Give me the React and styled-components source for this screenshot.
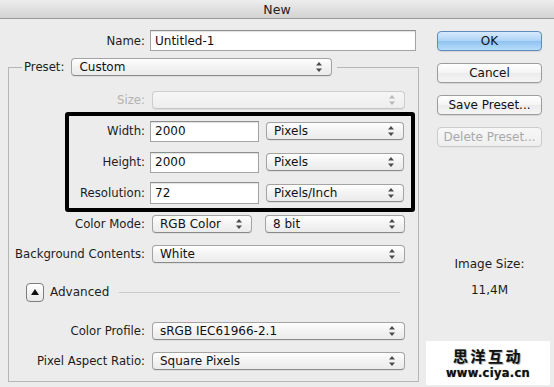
import React from "react";
import styled, { createGlobalStyle } from "styled-components";

const Global = createGlobalStyle`
  html, body { margin: 0; padding: 0; background: #ececec; }
  body {
    font-family: "DejaVu Sans", "Liberation Sans", "Noto Sans CJK SC", sans-serif;
    font-size: 11.7px;
    color: #1c1c1c;
  }
  * { box-sizing: border-box; }
`;

const Window = styled.div`
  position: relative;
  width: 554px;
  height: 387px;
  overflow: hidden;
  background: #ececec;
`;

const TitleBar = styled.div`
  height: 19px;
  background: linear-gradient(#ededed, #d3d3d3);
  border-bottom: 1px solid #9a9a9a;
  display: flex;
  align-items: center;
  justify-content: center;
  font-size: 12.5px;
  color: #222;
`;

const Body = styled.div`
  display: flex;
  padding: 11px 0 0 8px;
`;

const LeftCol = styled.div`
  width: 411px;
  display: flex;
  flex-direction: column;
`;

const RightCol = styled.div`
  margin-left: 18px;
  width: 105px;
  display: flex;
  flex-direction: column;
  align-items: stretch;
  padding-top: 1px;
`;

const NameRow = styled.div`
  display: grid;
  grid-template-columns: 137px 266px;
  column-gap: 5px;
  align-items: center;
  height: 21px;
`;

const Label = styled.span`
  text-align: right;
  white-space: nowrap;
  color: ${(p) => (p.$disabled ? "#b2b2b2" : "#1c1c1c")};
`;

const TextInput = styled.input`
  width: ${(p) => p.$w}px;
  height: ${(p) => p.$h || 21}px;
  margin: 0;
  padding: 0 0 0 4px;
  font: inherit;
  font-size: 12px;
  color: #111;
  background: #fff;
  border: 1px solid #a4a4a4;
  border-top-color: #8e8e8e;
  box-shadow: inset 0 1px 1px rgba(0, 0, 0, 0.12);
  outline: none;
`;

const Group = styled.fieldset`
  margin: 7px 0 0 0;
  padding: 13px 0 9px 0;
  border: 1px solid #b6b6b6;
  min-width: 0;
`;

const Legend = styled.legend`
  margin-left: 13px;
  padding: 0 5px 0 2px;
`;

const LegendInner = styled.span`
  display: flex;
  align-items: center;
  gap: 7px;
`;

const Row = styled.div`
  display: grid;
  grid-template-columns: 136px auto;
  column-gap: 5px;
  align-items: center;
  height: 22px;
  margin-top: ${(p) => p.$mt || 0}px;
`;

const Controls = styled.div`
  display: flex;
  align-items: center;
  gap: ${(p) => p.$gap || 0}px;
  padding-left: ${(p) => p.$pl || 0}px;
`;

const PopupBox = styled.div`
  position: relative;
  width: ${(p) => p.$w}px;
  height: 18px;
  border: 1px solid ${(p) => (p.$disabled ? "#cdcdcd" : "#a3a3a3")};
  border-bottom-color: ${(p) => (p.$disabled ? "#c4c4c4" : "#8a8a8a")};
  border-radius: 4px;
  background: ${(p) =>
    p.$disabled
      ? "linear-gradient(#f6f6f6, #eeeeee)"
      : "linear-gradient(#ffffff, #f3f3f3 50%, #ebebeb)"};
  box-shadow: 0 1px 0 rgba(0, 0, 0, 0.06);
  display: flex;
  align-items: center;
  padding-left: 7px;
  font-size: 12px;
  color: #111;
  white-space: nowrap;
`;

const Arrows = styled.svg`
  position: absolute;
  right: 9px;
  top: 50%;
  margin-top: -5px;
`;

const Popup = ({ w, disabled, children }) => (
  <PopupBox $w={w} $disabled={disabled}>
    {children}
    <Arrows width="6" height="10" viewBox="0 0 6 10">
      <polygon points="3,0 6,3.5 0,3.5" fill={disabled ? "#b8b8b8" : "#4a4a4a"} />
      <polygon points="0,6.5 6,6.5 3,10" fill={disabled ? "#b8b8b8" : "#4a4a4a"} />
    </Arrows>
  </PopupBox>
);

const Highlight = styled.div`
  position: relative;
  margin-top: 9px;
  display: flex;
  flex-direction: column;
  gap: 9px;
  &::after {
    content: "";
    position: absolute;
    top: -8px;
    bottom: -8px;
    left: 56px;
    right: 3px;
    border: 4px solid #000;
    border-radius: 3px;
    pointer-events: none;
  }
`;

const AdvancedRow = styled.div`
  display: flex;
  align-items: center;
  height: 22px;
  margin-top: 16px;
  padding: 0 18px 0 17px;
  gap: 6px;
`;

const Disclosure = styled.div`
  width: 18px;
  height: 19px;
  border: 1px solid #7d7d7d;
  border-radius: 4px;
  background: linear-gradient(#ffffff, #e9e9e9);
  display: flex;
  align-items: center;
  justify-content: center;
`;

const AdvText = styled.span`
  font-size: 12px;
  color: #1c1c1c;
`;

const Rule = styled.div`
  flex: 1;
  height: 1px;
  margin-left: 4px;
  background: #cacaca;
`;

const Button = styled.div`
  height: 20px;
  margin-top: ${(p) => p.$mt || 0}px;
  border-radius: 4px;
  display: flex;
  align-items: center;
  justify-content: center;
  font-size: 12px;
  color: ${(p) => (p.$disabled ? "#a9a9a9" : "#111")};
  border: 1px solid
    ${(p) => (p.$primary ? "#5f8cbd" : p.$disabled ? "#cbcbcb" : "#9d9d9d")};
  background: ${(p) =>
    p.$primary
      ? "linear-gradient(#d6eafd, #aed3f6 50%, #8fc2f0 51%, #b9dcfb)"
      : p.$disabled
      ? "linear-gradient(#f7f7f7, #efefef)"
      : "linear-gradient(#ffffff, #f4f4f4 50%, #ebebeb 51%, #f5f5f5)"};
  box-shadow: 0 1px 1px rgba(0, 0, 0, ${(p) => (p.$disabled ? 0.03 : 0.1)});
`;

const InfoText = styled.div`
  text-align: center;
  font-size: 12px;
  color: #1c1c1c;
  margin-top: ${(p) => p.$mt || 0}px;
`;

const Watermark = styled.div`
  position: absolute;
  left: 426px;
  top: 341px;
  width: 124px;
  height: 44px;
  background: #fff;
  display: flex;
  flex-direction: column;
  align-items: center;
  justify-content: center;
`;

const WmCn = styled.div`
  font-family: "Noto Sans CJK SC", sans-serif;
  font-weight: 700;
  font-size: 15px;
  line-height: 15px;
  height: 15px;
  letter-spacing: 2.5px;
  color: #111;
  text-shadow: 0 0 1px #888, 1px 1px 0 #bbb;
`;

const WmUrl = styled.div`
  margin-top: 4px;
  font-family: "DejaVu Sans", sans-serif;
  font-weight: 700;
  font-size: 11.5px;
  line-height: 12px;
  height: 12px;
  letter-spacing: 0.3px;
  color: #111;
  text-shadow: 0 0 1px #777;
`;

export default function App() {
  return (
    <Window>
      <Global />
      <TitleBar>New</TitleBar>
      <Body>
        <LeftCol>
          <NameRow>
            <Label>Name:</Label>
            <TextInput $w={266} defaultValue="Untitled-1" />
          </NameRow>
          <Group>
            <Legend>
              <LegendInner>
                <Label>Preset:</Label>
                <Popup w={261}>Custom</Popup>
              </LegendInner>
            </Legend>
            <Row>
              <Label $disabled>Size:</Label>
              <Controls $pl={2}>
                <Popup w={253} disabled />
              </Controls>
            </Row>
            <Highlight>
              <Row>
                <Label>Width:</Label>
                <Controls $gap={7}>
                  <TextInput $w={109} defaultValue="2000" />
                  <Popup w={138}>Pixels</Popup>
                </Controls>
              </Row>
              <Row>
                <Label>Height:</Label>
                <Controls $gap={7}>
                  <TextInput $w={109} defaultValue="2000" />
                  <Popup w={138}>Pixels</Popup>
                </Controls>
              </Row>
              <Row>
                <Label>Resolution:</Label>
                <Controls $gap={7}>
                  <TextInput $w={109} $h={22} defaultValue="72" />
                  <Popup w={138}>Pixels/Inch</Popup>
                </Controls>
              </Row>
            </Highlight>
            <Row $mt={9}>
              <Label>Color Mode:</Label>
              <Controls $pl={2} $gap={13}>
                <Popup w={100}>RGB Color</Popup>
                <Popup w={140}>8 bit</Popup>
              </Controls>
            </Row>
            <Row $mt={8}>
              <Label>Background Contents:</Label>
              <Controls $pl={2}>
                <Popup w={253}>White</Popup>
              </Controls>
            </Row>
            <AdvancedRow>
              <Disclosure>
                <svg width="8" height="6" viewBox="0 0 8 6">
                  <polygon points="4,0 8,6 0,6" fill="#111" />
                </svg>
              </Disclosure>
              <AdvText>Advanced</AdvText>
              <Rule />
            </AdvancedRow>
            <Row $mt={17}>
              <Label>Color Profile:</Label>
              <Controls $pl={2}>
                <Popup w={253}>sRGB IEC61966-2.1</Popup>
              </Controls>
            </Row>
            <Row $mt={8}>
              <Label>Pixel Aspect Ratio:</Label>
              <Controls $pl={2}>
                <Popup w={253}>Square Pixels</Popup>
              </Controls>
            </Row>
          </Group>
        </LeftCol>
        <RightCol>
          <Button $primary>OK</Button>
          <Button $mt={12}>Cancel</Button>
          <Button $mt={12}>Save Preset...</Button>
          <Button $mt={12} $disabled>Delete Preset...</Button>
          <InfoText $mt={110}>Image Size:</InfoText>
          <InfoText $mt={12}>11,4M</InfoText>
        </RightCol>
      </Body>
      <Watermark>
        <WmCn>思洋互动</WmCn>
        <WmUrl>www.ciya.cn</WmUrl>
      </Watermark>
    </Window>
  );
}
